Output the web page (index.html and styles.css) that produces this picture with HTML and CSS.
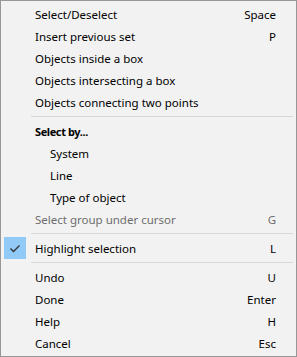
FILE: index.html
```html
<!DOCTYPE html>
<html lang="en">
<head>
    <meta charset="UTF-8">
    <title>Select menu</title>
    <link rel="stylesheet" href="styles.css">
</head>
<body>
    <div class="menu">
        <div class="item"><span class="label">Select/Deselect</span><span class="key">Space</span></div>
        <div class="item"><span class="label">Insert previous set</span><span class="key">P</span></div>
        <div class="item"><span class="label">Objects inside a box</span></div>
        <div class="item"><span class="label">Objects intersecting a box</span></div>
        <div class="item"><span class="label">Objects connecting two points</span></div>
        <div class="sep"></div>
        <div class="item bold"><span class="label">Select by...</span></div>
        <div class="item sub"><span class="label">System</span></div>
        <div class="item sub"><span class="label">Line</span></div>
        <div class="item sub"><span class="label">Type of object</span></div>
        <div class="item disabled"><span class="label">Select group under cursor</span><span class="key">G</span></div>
        <div class="sep"></div>
        <div class="item checked">
            <span class="check">
                <svg width="22" height="22" viewBox="0 0 22 22"><polyline points="6.5,11.5 9.5,14.5 15.5,8.5" fill="none" stroke="#333" stroke-width="1.4"/></svg>
            </span>
            <span class="label">Highlight selection</span><span class="key">L</span>
        </div>
        <div class="sep"></div>
        <div class="item"><span class="label">Undo</span><span class="key">U</span></div>
        <div class="item"><span class="label">Done</span><span class="key">Enter</span></div>
        <div class="item"><span class="label">Help</span><span class="key">H</span></div>
        <div class="item"><span class="label">Cancel</span><span class="key">Esc</span></div>
    </div>
</body>
</html>
```
FILE: styles.css
```css
body {
    margin: 0;
    font-family: 'Noto Sans', sans-serif;
    font-size: 11.5px;
    color: #000;
}
.menu {
    width: 297px;
    height: 357px;
    box-sizing: border-box;
    background-color: #f2f2f2;
    border: 1px solid #979797;
    padding: 2px 2px;
}
.item {
    position: relative;
    display: flex;
    align-items: center;
    height: 22px;
    padding-left: 32px;
    padding-right: 18px;
}
.label {
    flex: 1;
    white-space: nowrap;
}
.key {
    white-space: nowrap;
}
.bold .label {
    font-weight: bold;
    font-size: 11px;
    letter-spacing: -0.4px;
}
.sub {
    padding-left: 47px;
}
.disabled {
    color: #6d6d6d;
}
.check {
    position: absolute;
    left: 1px;
    top: 0;
    width: 22px;
    height: 22px;
    background-color: #91c9f7;
}
.check svg {
    display: block;
}
.sep {
    height: 1px;
    margin: 3px 1px 3px 28px;
    background-color: #d7d7d7;
}
```
